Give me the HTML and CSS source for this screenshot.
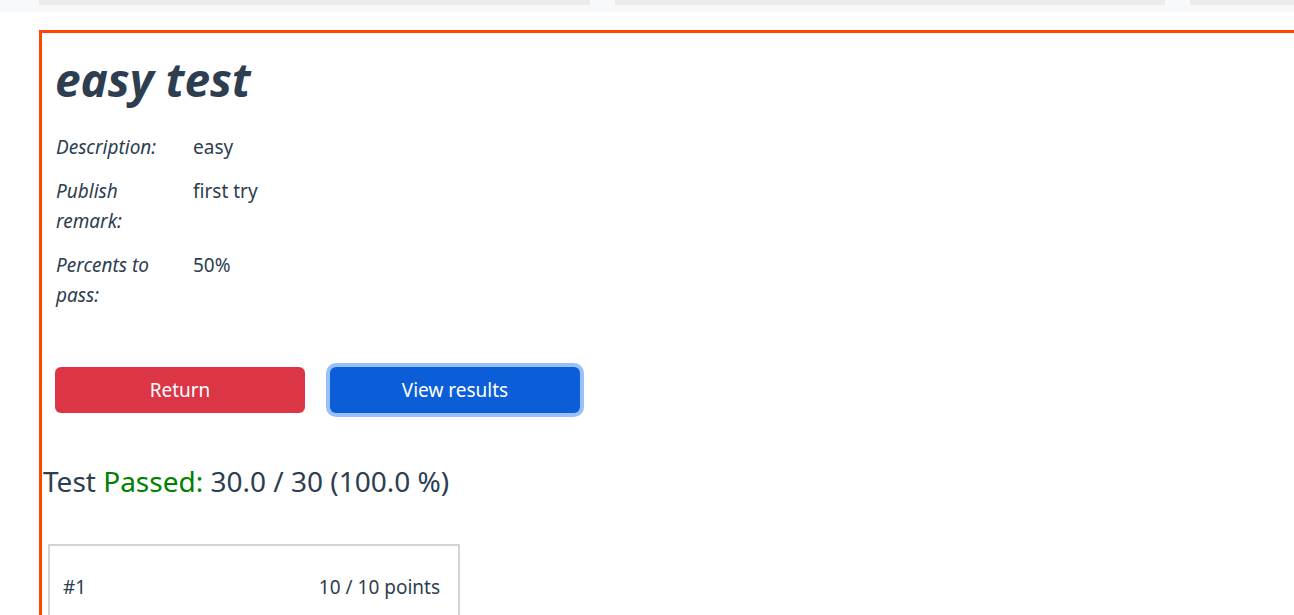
FILE: index.html
```html
<!DOCTYPE html>
<html lang="en">
<head>
<meta charset="utf-8">
<title>easy test</title>
<link rel="stylesheet" href="styles.css">
</head>
<body>
<div class="topbar">
  <div class="tab tab-1"></div>
  <div class="tab tab-2"></div>
  <div class="tab tab-3"></div>
</div>
<main class="frame">
  <section class="intro">
    <h1 class="title">easy test</h1>
    <table class="info">
      <tr><th>Description:</th><td>easy</td></tr>
      <tr><th>Publish remark:</th><td>first try</td></tr>
      <tr><th>Percents to pass:</th><td>50%</td></tr>
    </table>
    <div class="actions">
      <button class="btn btn-red">Return</button>
      <button class="btn btn-blue">View results</button>
    </div>
  </section>
  <h2 class="score">Test <span class="passed">Passed:</span> 30.0 / 30 (100.0 %)</h2>
  <div class="card">
    <div class="card-row">
      <span>#1</span>
      <span>10 / 10 points</span>
    </div>
  </div>
</main>
</body>
</html>
```
FILE: styles.css
```css
html, body {
  margin: 0;
  padding: 0;
  overflow: hidden;
  background: #fff;
}
body {
  font-family: "Noto Sans", "Open Sans", sans-serif;
  color: #2c3e50;
  font-size: 19px;
}
.topbar {
  height: 12px;
  background: #f8f9fa;
  display: flex;
  padding-left: 39px;
  gap: 25px;
}
.tab {
  height: 5px;
  background: #ececec;
}
.tab-1 { width: 551px; }
.tab-2 { width: 550px; }
.tab-3 { flex: 1; }
.frame {
  margin: 18px 0 0 39px;
  width: 1400px;
  border-top: 3px solid #ff4500;
  border-left: 3px solid #ff4500;
  min-height: 600px;
}
.intro {
  padding: 22px 0 0 13px;
}
.title {
  margin: 0 0 22px;
  font-size: 46px;
  font-style: italic;
  font-weight: 700;
  line-height: 48px;
}
.info {
  border-collapse: collapse;
}
.info th {
  font-weight: 400;
  font-style: italic;
  text-align: left;
  vertical-align: top;
  width: 120px;
  padding: 7px 17px 7px 1px;
  line-height: 30px;
}
.info td {
  vertical-align: top;
  padding: 7px 0;
  line-height: 30px;
}
.actions {
  display: flex;
  gap: 25px;
  margin-top: 50px;
}
.btn {
  width: 250px;
  height: 46px;
  border: 0;
  border-radius: 6px;
  color: #fff;
  font-family: inherit;
  font-size: 19px;
}
.btn-red { background: #dc3545; }
.btn-blue {
  background: #0b5ed7;
  box-shadow: 0 0 0 4px #98c0fb;
}
.score {
  margin: 51px 0 0 1px;
  font-size: 28px;
  font-weight: 400;
  line-height: 34px;
}
.passed { color: #008000; }
.card {
  margin: 46px 0 0 6px;
  width: 408px;
  border: 2px solid #d3d3d3;
  height: 120px;
}
.card-row {
  display: flex;
  justify-content: space-between;
  padding: 28px 18px 0 13px;
}
```
